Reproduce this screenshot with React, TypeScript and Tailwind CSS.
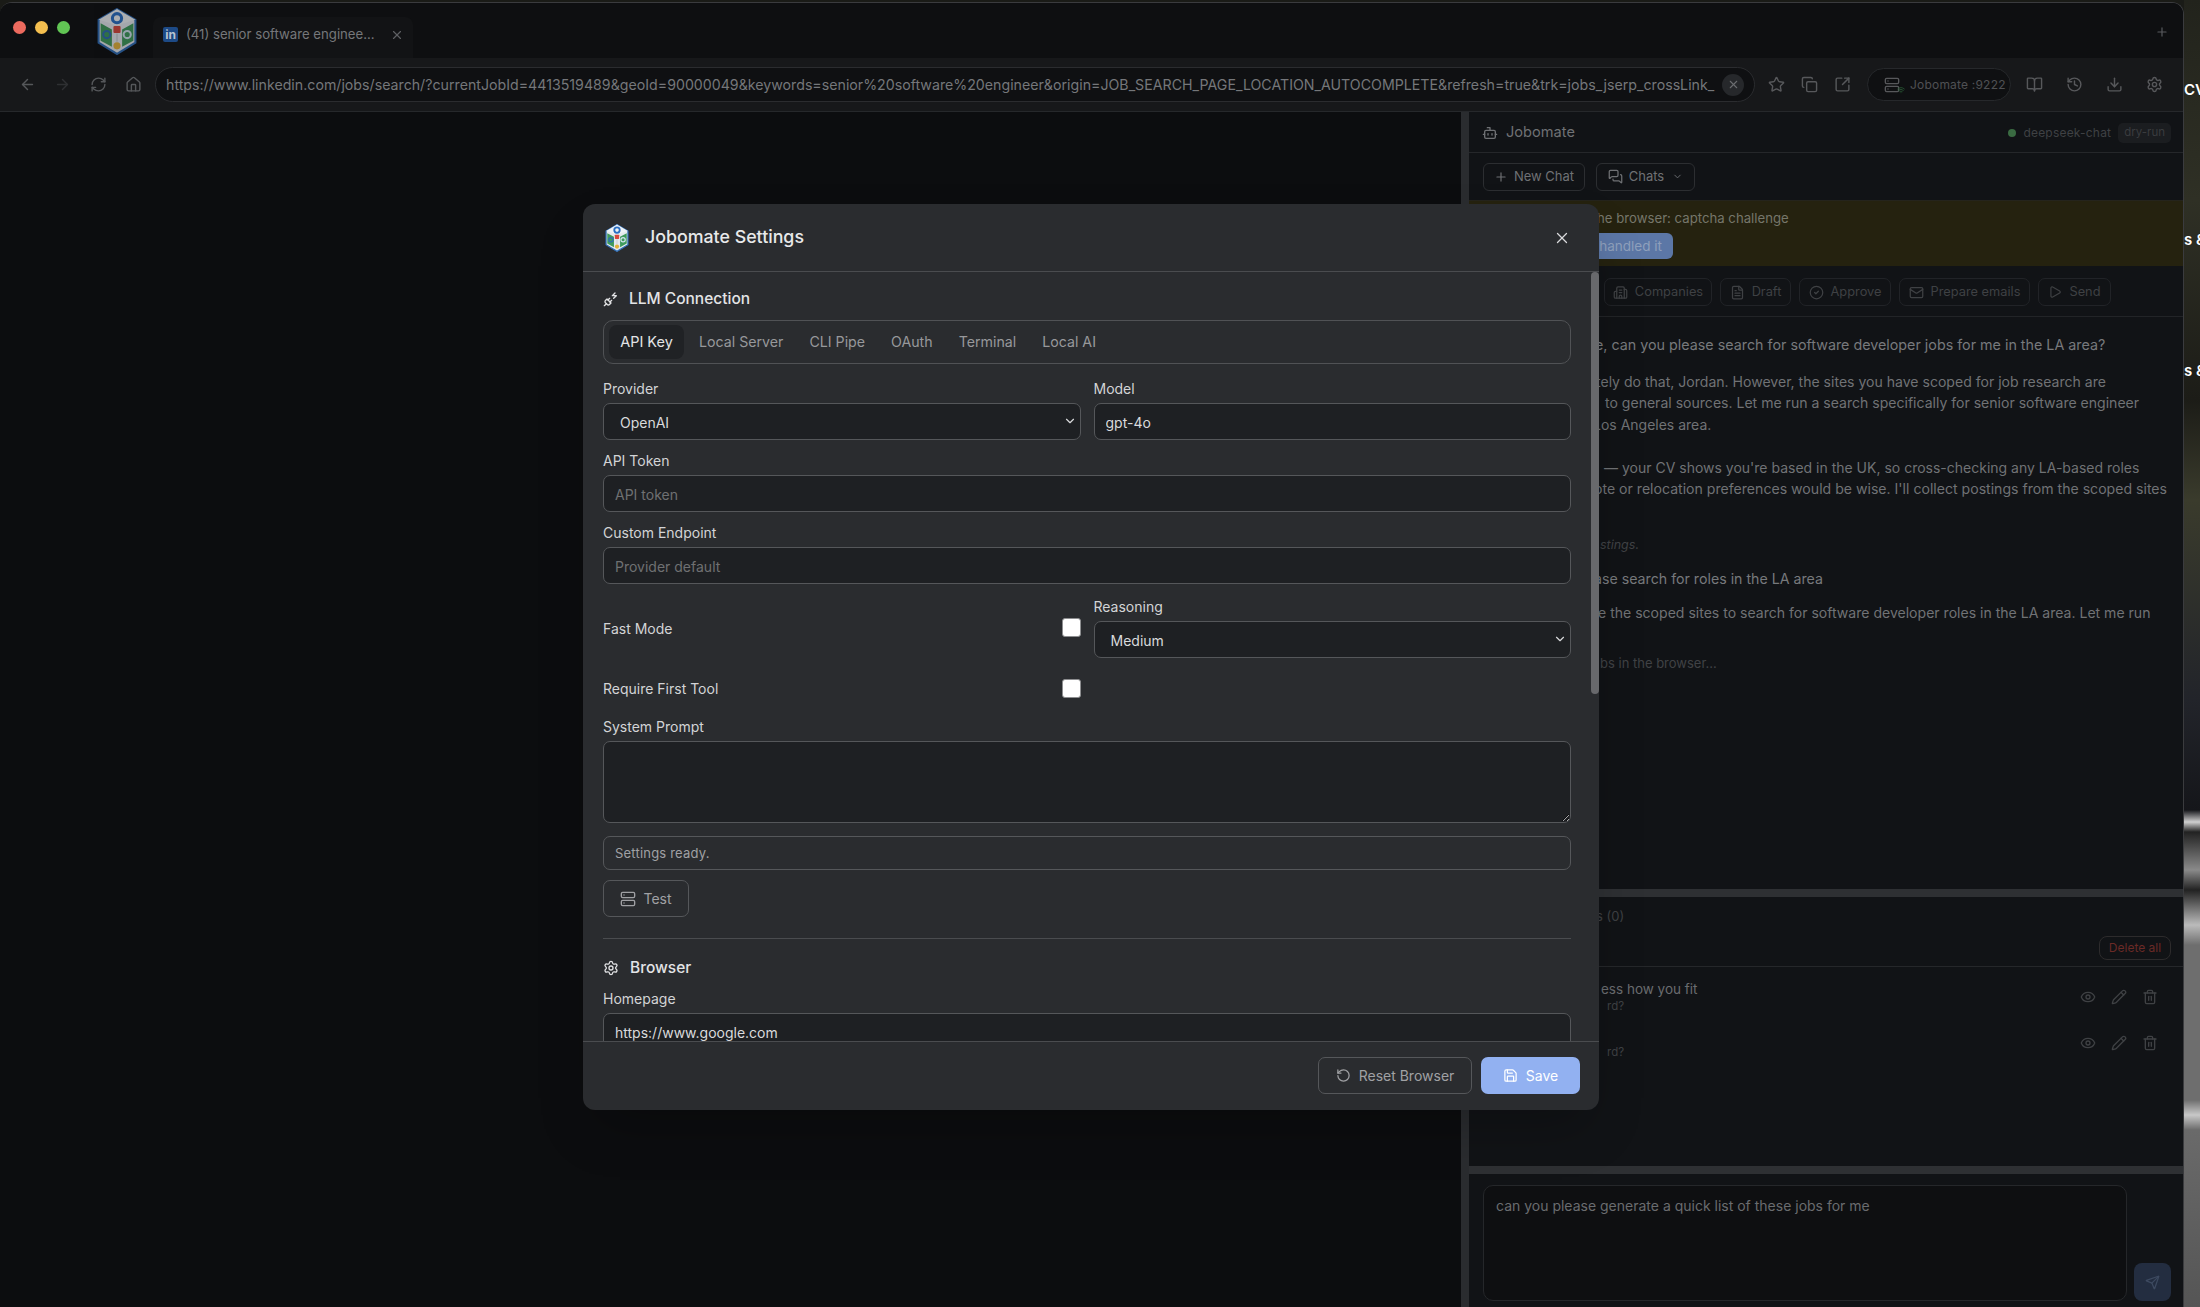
import { ReactNode } from "react";
import {
  ArrowLeft,
  ArrowRight,
  BookOpen,
  Bot,
  Building2,
  ChevronDown,
  CircleCheck,
  Copy,
  Download,
  Eye,
  FileText,
  History,
  Home,
  Mail,
  MessagesSquare,
  Pencil,
  Play,
  Plus,
  PlugZap,
  RefreshCw,
  RotateCcw,
  Save,
  Send,
  Server,
  Settings,
  SquareArrowOutUpRight,
  Star,
  Trash2,
  Wifi,
  X,
} from "lucide-react";

const URL_TEXT =
  "https://www.linkedin.com/jobs/search/?currentJobId=4413519489&geoId=90000049&keywords=senior%20software%20engineer&origin=JOB_SEARCH_PAGE_LOCATION_AUTOCOMPLETE&refresh=true&trk=jobs_jserp_crossLink_";

function Logo({ className }: { className: string }) {
  return (
    <svg viewBox="0 0 40 46" className={className}>
      <polygon points="20,1 38,11.5 38,34 20,45 2,34 2,11.5" fill="#e4e9ee" stroke="#2f6db5" strokeWidth="2" />
      <polygon points="20,17 38,11.5 20,1 2,11.5" fill="#eef2f6" />
      <circle cx="20" cy="10" r="4.5" fill="none" stroke="#2a6fc4" strokeWidth="3" />
      <path d="M4 15 L15 21 V38 L4 32 Z" fill="#3f9a5c" />
      <path d="M36 15 L25 21 V38 L36 32 Z" fill="#3f9a5c" />
      <circle cx="10" cy="26" r="3.5" fill="none" stroke="#2f6db5" strokeWidth="2" />
      <circle cx="30" cy="26" r="3.5" fill="none" stroke="#cfe3ee" strokeWidth="2" />
      <rect x="16.5" y="17.5" width="7" height="7" rx="1" fill="#d8483c" />
      <path d="M20 25 V33" stroke="#c9ced4" strokeWidth="1.5" />
      <circle cx="20" cy="37" r="3.5" fill="#e3b23c" />
    </svg>
  );
}

function Label({ children }: { children: ReactNode }) {
  return <div className="flex h-5 items-center pb-[2px] text-[14px] text-[#d3d4d6]">{children}</div>;
}

function TextField({ value, placeholder }: { value?: string; placeholder?: string }) {
  return (
    <input
      readOnly
      value={value ?? ""}
      placeholder={placeholder}
      className="mt-1 block h-[37px] w-full rounded-[7px] border border-[#55575a] bg-[#1e2023] px-[11px] pt-px text-[14px] text-[#d9dadc] outline-none placeholder:text-[#6f7072]"
    />
  );
}

function SelectField({ value }: { value: string }) {
  return (
    <div className="relative mt-1">
      <select
        value={value}
        onChange={() => {}}
        className="block h-[37px] w-full appearance-none rounded-[7px] border border-[#55575a] bg-[#1e2023] px-4 pt-px text-[14px] text-[#d9dadc] outline-none"
      >
        <option>{value}</option>
      </select>
      <ChevronDown size={14} className="absolute right-[4px] top-[11px] text-[#d9dadc]" />
    </div>
  );
}

function ToolIcon({ children }: { children: ReactNode }) {
  return <div className="flex w-[20px] justify-center text-[#57585b]">{children}</div>;
}

function ActionButton({ icon, label, width }: { icon: ReactNode; label: string; width: string }) {
  return (
    <div className={`flex h-[28px] items-center justify-center gap-[7px] rounded-[7px] border border-[#212327] text-[12.8px] text-[#3f4144] ${width}`}>
      {icon}
      {label}
    </div>
  );
}

function ChatLine({ className, children }: { className: string; children: ReactNode }) {
  return <p className={`whitespace-nowrap leading-[21.5px] ${className}`}>{children}</p>;
}

function RowIcons({ className }: { className: string }) {
  return (
    <div className={`ml-auto mr-[25px] flex gap-[15px] text-[#3f4144] ${className}`}>
      <Eye size={16} />
      <Pencil size={16} />
      <Trash2 size={16} />
    </div>
  );
}

function BrowserChrome() {
  return (
    <>
      <div className="relative flex h-[55px] shrink-0 items-start bg-[#0e0f11]">
        <div className="ml-[13px] mt-[18px] flex gap-[9px]">
          <div className="h-[13px] w-[13px] rounded-full bg-[#ec6a5e]" />
          <div className="h-[13px] w-[13px] rounded-full bg-[#f4bf4f]" />
          <div className="h-[13px] w-[13px] rounded-full bg-[#61c554]" />
        </div>
        <Logo className="ml-[26px] mt-[5px] h-[47px] w-[42px] opacity-70" />
        <div className="ml-[15px] mt-[14px] flex h-[41px] w-[260px] items-center rounded-t-lg bg-[#121315] pb-[6px] pl-[10px]">
          <div className="flex h-[15px] w-[15px] items-center justify-center rounded-[2px] bg-[#1d4a86] text-[12px] font-bold text-[#b9c3d1]">in</div>
          <span className="ml-2 w-[190px] whitespace-nowrap text-[13.2px] text-[#75777a]">(41) senior software enginee...</span>
          <X size={14} className="ml-[14px] text-[#5d5f62]" />
        </div>
        <Plus size={14} className="absolute right-[14px] top-[22px] text-[#595b5e]" />
      </div>

      <div className="flex h-[54px] shrink-0 items-center border-b border-[#26282b] bg-[#17181a]">
        <ArrowLeft size={17} className="ml-[19px] text-[#55575a]" />
        <ArrowRight size={17} className="ml-[18px] text-[#2f3033]" />
        <RefreshCw size={17} className="ml-[19px] text-[#55575a]" />
        <Home size={17} className="ml-[18px] text-[#55575a]" />
        <div className="ml-[13px] flex h-[35px] w-[1600px] shrink-0 items-center rounded-full border border-[#2b2c2f] bg-[#0f1012] pl-[10px] pr-[10px]">
          <span className="w-[1556px] shrink-0 overflow-hidden whitespace-nowrap text-[14.2px] text-[#75777a]">{URL_TEXT}</span>
          <div className="flex h-[22px] w-[22px] shrink-0 items-center justify-center rounded-full bg-[#26282b]">
            <X size={13} className="text-[#6a6c6f]" />
          </div>
        </div>
        <div className="ml-[11px] flex gap-[13px]">
          <ToolIcon><Star size={17} /></ToolIcon>
          <ToolIcon><Copy size={17} /></ToolIcon>
          <ToolIcon><SquareArrowOutUpRight size={17} /></ToolIcon>
        </div>
        <div className="ml-[15px] flex h-[33px] w-[144px] shrink-0 items-center rounded-full border border-[#26282b] bg-[#0f1012] pl-[16px]">
          <div className="relative">
            <Server size={16} className="text-[#57585b]" />
            <Wifi size={8} className="absolute -bottom-[1px] -right-[5px] text-[#2f6b3c]" />
          </div>
          <span className="ml-[10px] whitespace-nowrap text-[12px] tracking-[0.2px] text-[#4f5154]">Jobomate :9222</span>
        </div>
        <div className="ml-[13px] flex gap-[20px]">
          <ToolIcon><BookOpen size={17} /></ToolIcon>
          <ToolIcon><History size={17} /></ToolIcon>
          <ToolIcon><Download size={17} /></ToolIcon>
          <ToolIcon><Settings size={17} /></ToolIcon>
        </div>
      </div>
    </>
  );
}

function SidePanel() {
  return (
    <div className="flex w-[722px] shrink-0 flex-col border-l-[8px] border-[#2a2c2f] bg-[#111316]">
      <div className="flex h-[41px] shrink-0 items-center border-b border-[#25272a] pl-[13px] pr-[12px] pt-[2px] text-[#6f7174]">
        <Bot size={16} />
        <span className="ml-[8px] text-[14.6px]">Jobomate</span>
        <div className="ml-auto h-[8px] w-[8px] rounded-full bg-[#3a6b42]" />
        <span className="ml-[7px] text-[12px] tracking-[0.2px] text-[#3f4144]">deepseek-chat</span>
        <span className="ml-[7px] rounded-[5px] bg-[#1b1d20] px-[6px] py-[1px] text-[11.5px] text-[#3a3c3f]">dry-run</span>
      </div>
      <div className="flex h-[47px] shrink-0 items-center gap-[11px] pl-[14px]">
        <div className="flex h-[28px] w-[102px] items-center justify-center gap-[6px] rounded-[6px] border border-[#2c2e31] text-[13px] text-[#6f7174]">
          <Plus size={14} /> New Chat
        </div>
        <div className="flex h-[28px] w-[99px] items-center justify-center gap-[6px] rounded-[6px] border border-[#2c2e31] text-[13px] text-[#6f7174]">
          <MessagesSquare size={15} /> Chats <ChevronDown size={11} className="ml-[2px]" />
        </div>
      </div>
      <div className="h-[66px] shrink-0 border-t border-[#25241c] bg-[#25220f] pl-[128px] pt-[7px] text-[13.2px] text-[#76766a]">
        <p className="whitespace-nowrap leading-[20px]">he browser: captcha challenge</p>
        <div className="ml-[-80px] mt-[5px] flex h-[26px] w-[156px] items-center justify-end rounded-[6px] bg-[#5c77a6] pr-[11px] text-[13.5px] text-[#8fa0bc]">
          handled it
        </div>
      </div>
      <div className="flex h-[51px] shrink-0 items-center gap-[8px] border-b border-[#222427] pl-[135px] pt-[2px]">
        <ActionButton icon={<Building2 size={15} />} label="Companies" width="w-[108px]" />
        <ActionButton icon={<FileText size={15} />} label="Draft" width="w-[71px]" />
        <ActionButton icon={<CircleCheck size={15} />} label="Approve" width="w-[92px]" />
        <ActionButton icon={<Mail size={15} />} label="Prepare emails" width="w-[131px]" />
        <ActionButton icon={<Play size={14} />} label="Send" width="w-[73px]" />
      </div>

      <div className="h-[572px] shrink-0 overflow-hidden pt-[17px] text-[14px] text-[#707275]">
        <ChatLine className="ml-[126px] text-[14.3px] text-[#77797c]">e, can you please search for software developer jobs for me in the LA area?</ChatLine>
        <ChatLine className="ml-[127px] mt-[15px] text-[14.05px]">tely do that, Jordan. However, the sites you have scoped for job research are</ChatLine>
        <ChatLine className="ml-[136px] text-[14.05px]">to general sources. Let me run a search specifically for senior software engineer</ChatLine>
        <ChatLine className="ml-[124px]">Los Angeles area.</ChatLine>
        <ChatLine className="ml-[135px] mt-[21.5px]">— your CV shows you're based in the UK, so cross-checking any LA-based roles</ChatLine>
        <ChatLine className="ml-[125px] text-[14.1px]">ote or relocation preferences would be wise. I'll collect postings from the scoped sites</ChatLine>
        <ChatLine className="ml-[131px] mt-[34px] text-[12.5px] italic text-[#404245]">stings.</ChatLine>
        <ChatLine className="ml-[125px] mt-[12.5px] text-[14.2px] text-[#77797c]">ase search for roles in the LA area</ChatLine>
        <ChatLine className="ml-[129px] mt-[13px] text-[14.05px]">e the scoped sites to search for software developer roles in the LA area. Let me run</ChatLine>
        <ChatLine className="ml-[131px] mt-[29px] text-[13px] text-[#404245]">bs in the browser...</ChatLine>
      </div>

      <div className="h-[8px] shrink-0 bg-[#2e3033]" />

      <div className="relative h-[269px] shrink-0">
        <p className="absolute left-[127px] top-[10px] text-[13px] text-[#3f4144]">s (0)</p>
        <div className="flex h-[70px] items-end justify-end border-b border-[#25272a] pb-[6px] pr-[12px]">
          <div className="flex h-[24px] w-[72px] items-center justify-center rounded-[8px] border border-[#2d2b2c] text-[12px] text-[#6a2a26]">Delete all</div>
        </div>
        <div className="flex h-[56px] items-start pt-[12px]">
          <div className="ml-[132px] text-[13.5px] leading-[20px] text-[#6a6c6f]">
            <p>ess how you fit</p>
            <p className="ml-[6px] text-[11.5px] leading-[14px] text-[#3f4144]">rd?</p>
          </div>
          <RowIcons className="mt-[10px]" />
        </div>
        <div className="flex items-start">
          <p className="ml-[138px] mt-[22px] text-[11.5px] leading-[14px] text-[#3f4144]">rd?</p>
          <RowIcons className="mt-[12px]" />
        </div>
      </div>

      <div className="h-[8px] shrink-0 bg-[#2e3033]" />

      <div className="flex flex-1 items-end gap-[7px] pb-[6px] pl-[14px]">
        <div className="h-[116px] w-[644px] rounded-[10px] border border-[#25272a] bg-[#0e0f11] px-[12px] py-[10px] text-[14px] leading-[20px] text-[#6a6c6f]">
          can you please generate a quick list of these jobs for me
        </div>
        <div className="flex h-[38px] w-[37px] items-center justify-center rounded-[8px] bg-[#232d40] text-[#3d4a60]">
          <Send size={15} />
        </div>
      </div>
    </div>
  );
}

function SettingsModal() {
  return (
    <div className="absolute left-[583px] top-[204px] flex h-[906px] w-[1016px] flex-col overflow-hidden rounded-[12px] bg-[#2a2c2f] text-[#d9dadc] shadow-2xl">
      <div className="flex h-[68px] shrink-0 items-center border-b border-[#4a4c4f] pl-[21px] pr-[28px]">
        <Logo className="h-[28px] w-[26px]" />
        <h2 className="ml-[15px] text-[17.8px] font-medium text-[#e8e9ea]">Jobomate Settings</h2>
        <X size={18} strokeWidth={1.75} className="ml-auto text-[#d9dadc]" />
      </div>

      <div className="relative min-h-0 flex-1 overflow-hidden pl-[20px] pr-[28px] pt-[16px]">
        <div className="absolute right-0 top-0 h-[422px] w-[8px] rounded-full bg-[#68696c]" />
        <div className="flex h-[22px] items-center">
          <PlugZap size={16} className="text-[#e0e1e3]" />
          <span className="ml-[10px] text-[15.5px] font-medium text-[#e3e4e6]">LLM Connection</span>
        </div>
        <div className="mt-[10px] flex h-[44px] items-center rounded-[10px] border border-[#505255] pl-[5px] text-[14.2px] text-[#97989b]">
          <div className="flex h-[34px] w-[75px] items-center justify-center rounded-[8px] bg-[#202225] text-[14.5px] text-[#e3e4e6]">API Key</div>
          <span className="ml-[15px]">Local Server</span>
          <span className="ml-[26px]">CLI Pipe</span>
          <span className="ml-[26px]">OAuth</span>
          <span className="ml-[26px]">Terminal</span>
          <span className="ml-[26px]">Local AI</span>
        </div>

        <div className="mt-[15px] grid grid-cols-2 gap-x-[13px]">
          <div>
            <Label>Provider</Label>
            <SelectField value="OpenAI" />
          </div>
          <div>
            <Label>Model</Label>
            <TextField value="gpt-4o" />
          </div>
        </div>
        <div className="mt-[11px]">
          <Label>API Token</Label>
          <TextField placeholder="API token" />
        </div>
        <div className="mt-[11px]">
          <Label>Custom Endpoint</Label>
          <TextField placeholder="Provider default" />
        </div>

        <div className="mt-[13px] grid grid-cols-2 items-center gap-x-[13px]">
          <div className="flex items-center justify-between">
            <span className="pt-px text-[14px] text-[#d3d4d6]">Fast Mode</span>
            <input type="checkbox" className="h-[19px] w-[19px] appearance-none rounded-[3px] border border-[#8d8e90] bg-white" />
          </div>
          <div>
            <Label>Reasoning</Label>
            <SelectField value="Medium" />
          </div>
        </div>
        <div className="mt-[21px] grid grid-cols-2 items-center gap-x-[13px]">
          <div className="flex h-[19px] items-center justify-between">
            <span className="text-[14px] text-[#d3d4d6]">Require First Tool</span>
            <input type="checkbox" className="h-[19px] w-[19px] appearance-none rounded-[3px] border border-[#8d8e90] bg-white" />
          </div>
        </div>
        <div className="mt-[19px]">
          <Label>System Prompt</Label>
          <textarea
            readOnly
            className="mt-1 block h-[82px] w-full rounded-[7px] border border-[#55575a] bg-[#1e2023] outline-none"
          />
        </div>
        <div className="mt-[13px] flex h-[34px] items-center rounded-[7px] border border-[#55575a] px-[11px] pt-px text-[13px] tracking-[0.2px] text-[#a0a1a4]">
          Settings ready.
        </div>
        <button className="mt-[10px] flex h-[37px] w-[86px] items-center justify-center gap-[7px] rounded-[7px] border border-[#55575a] text-[14px] text-[#a0a1a4]">
          <Server size={16} /> Test
        </button>
        <div className="mt-[21px] h-px bg-[#4a4c4f]" />
        <div className="mt-[18px] flex h-[22px] items-center">
          <Settings size={16} className="text-[#e0e1e3]" />
          <span className="ml-[11px] text-[15.5px] font-medium text-[#e3e4e6]">Browser</span>
        </div>
        <div className="mt-[10px]">
          <Label>Homepage</Label>
          <TextField value="https://www.google.com" />
        </div>
      </div>

      <div className="flex h-[69px] shrink-0 items-start justify-end gap-[9px] border-t border-[#4a4c4f] pr-[19px] pt-[15px] text-[14px]">
        <button className="flex h-[37px] w-[154px] items-center justify-center gap-[8px] rounded-[7px] border border-[#55575a] text-[#a0a1a4]">
          <RotateCcw size={15} /> Reset Browser
        </button>
        <button className="flex h-[37px] w-[99px] items-center justify-center gap-[8px] rounded-[7px] bg-[#92b1f1] text-white">
          <Save size={15} /> Save
        </button>
      </div>
    </div>
  );
}

export default function App() {
  return (
    <div className="relative flex h-[1307px] w-[2200px] overflow-hidden bg-[#1a1b17] font-[Inter,sans-serif]">
      <div className="mt-[2px] flex h-[1305px] w-[2184px] shrink-0 flex-col overflow-hidden rounded-t-[12px] border-r border-t border-[#3a3b3e] bg-[#0d0e10]">
        <BrowserChrome />
        <div className="flex min-h-0 flex-1">
          <div className="flex-1 bg-[#0c0d0f]" />
          <SidePanel />
        </div>
      </div>
      <div className="min-w-0 flex-1 overflow-hidden bg-[linear-gradient(180deg,#22231c_0px,#2f3025_200px,#1c1c17_400px,#3a3b2c_500px,#22242a_700px,#15161a_810px,#d0d0d0_822px,#222222_832px,#8a8a8a_870px,#222222_890px,#bbbbbb_925px,#6e6e6e_945px,#6e6e6e_1100px,#c8c8c8_1115px,#6a6a6a_1130px,#555555_1307px)] pt-[79px] text-[15px] font-semibold text-white">
        <p className="whitespace-nowrap">CV</p>
        <p className="mt-[127px] whitespace-nowrap">s &amp;</p>
        <p className="mt-[109px] whitespace-nowrap">s &amp;</p>
      </div>
      <SettingsModal />
    </div>
  );
}
